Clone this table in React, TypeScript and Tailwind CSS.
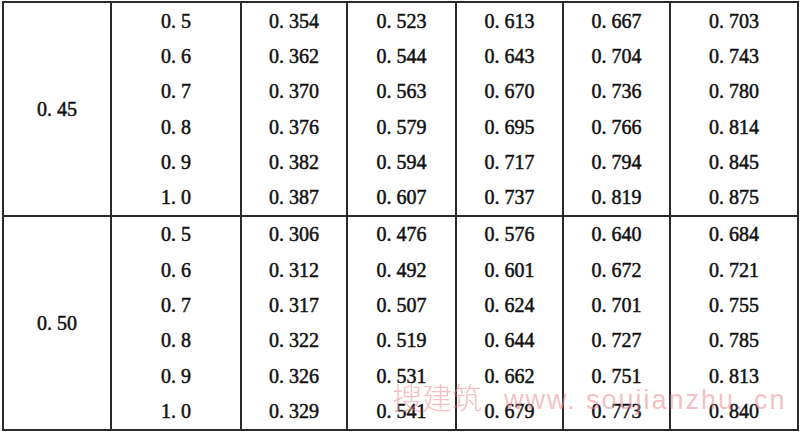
import React from 'react';

const groups = [
  {
    label: '0. 45',
    rows: [
      ['0. 5', '0. 354', '0. 523', '0. 613', '0. 667', '0. 703'],
      ['0. 6', '0. 362', '0. 544', '0. 643', '0. 704', '0. 743'],
      ['0. 7', '0. 370', '0. 563', '0. 670', '0. 736', '0. 780'],
      ['0. 8', '0. 376', '0. 579', '0. 695', '0. 766', '0. 814'],
      ['0. 9', '0. 382', '0. 594', '0. 717', '0. 794', '0. 845'],
      ['1. 0', '0. 387', '0. 607', '0. 737', '0. 819', '0. 875'],
    ],
  },
  {
    label: '0. 50',
    rows: [
      ['0. 5', '0. 306', '0. 476', '0. 576', '0. 640', '0. 684'],
      ['0. 6', '0. 312', '0. 492', '0. 601', '0. 672', '0. 721'],
      ['0. 7', '0. 317', '0. 507', '0. 624', '0. 701', '0. 755'],
      ['0. 8', '0. 322', '0. 519', '0. 644', '0. 727', '0. 785'],
      ['0. 9', '0. 326', '0. 531', '0. 662', '0. 751', '0. 813'],
      ['1. 0', '0. 329', '0. 541', '0. 679', '0. 773', '0. 840'],
    ],
  },
];

const App = () => {
  return (
    <div className="relative w-[800px] h-[432px] bg-white overflow-hidden pt-px pl-[2px] font-[family-name:'Liberation_Serif',serif] text-[20px] text-[#111]">
      <div className="w-[797px] border-2 border-[#2a2a2a] [-webkit-text-stroke-width:0.5px]">
        {groups.map((g, gi) => (
          <div
            key={g.label}
            className={`grid grid-cols-[108px_130px_106px_109px_107px_107px_1fr] ${gi > 0 ? 'border-t-2 border-[#2a2a2a]' : ''}`}
          >
            <div className="row-span-6 flex items-center justify-center border-r-2 border-[#2a2a2a]">
              {g.label}
            </div>
            {g.rows.map((row) =>
              row.map((v, ci) => (
                <div
                  key={row[0] + ci}
                  className={`h-[35.3px] flex items-center justify-center ${ci < 5 ? 'border-r-2 border-[#2a2a2a]' : ''}`}
                >
                  {v}
                </div>
              ))
            )}
          </div>
        ))}
      </div>

      {/* watermark */}
      <div className="absolute left-[392px] top-[374px] flex items-baseline gap-[22px] whitespace-nowrap text-[#ec8a94]/55 pointer-events-none">
        <span className="font-[family-name:'Noto_Sans_CJK_SC',sans-serif] text-[30px] font-light">搜建筑</span>
        <span className="font-[family-name:'Liberation_Sans',sans-serif] text-[27px] tracking-[2px]">www. soujianzhu. cn</span>
      </div>
    </div>
  );
};

export default App;
